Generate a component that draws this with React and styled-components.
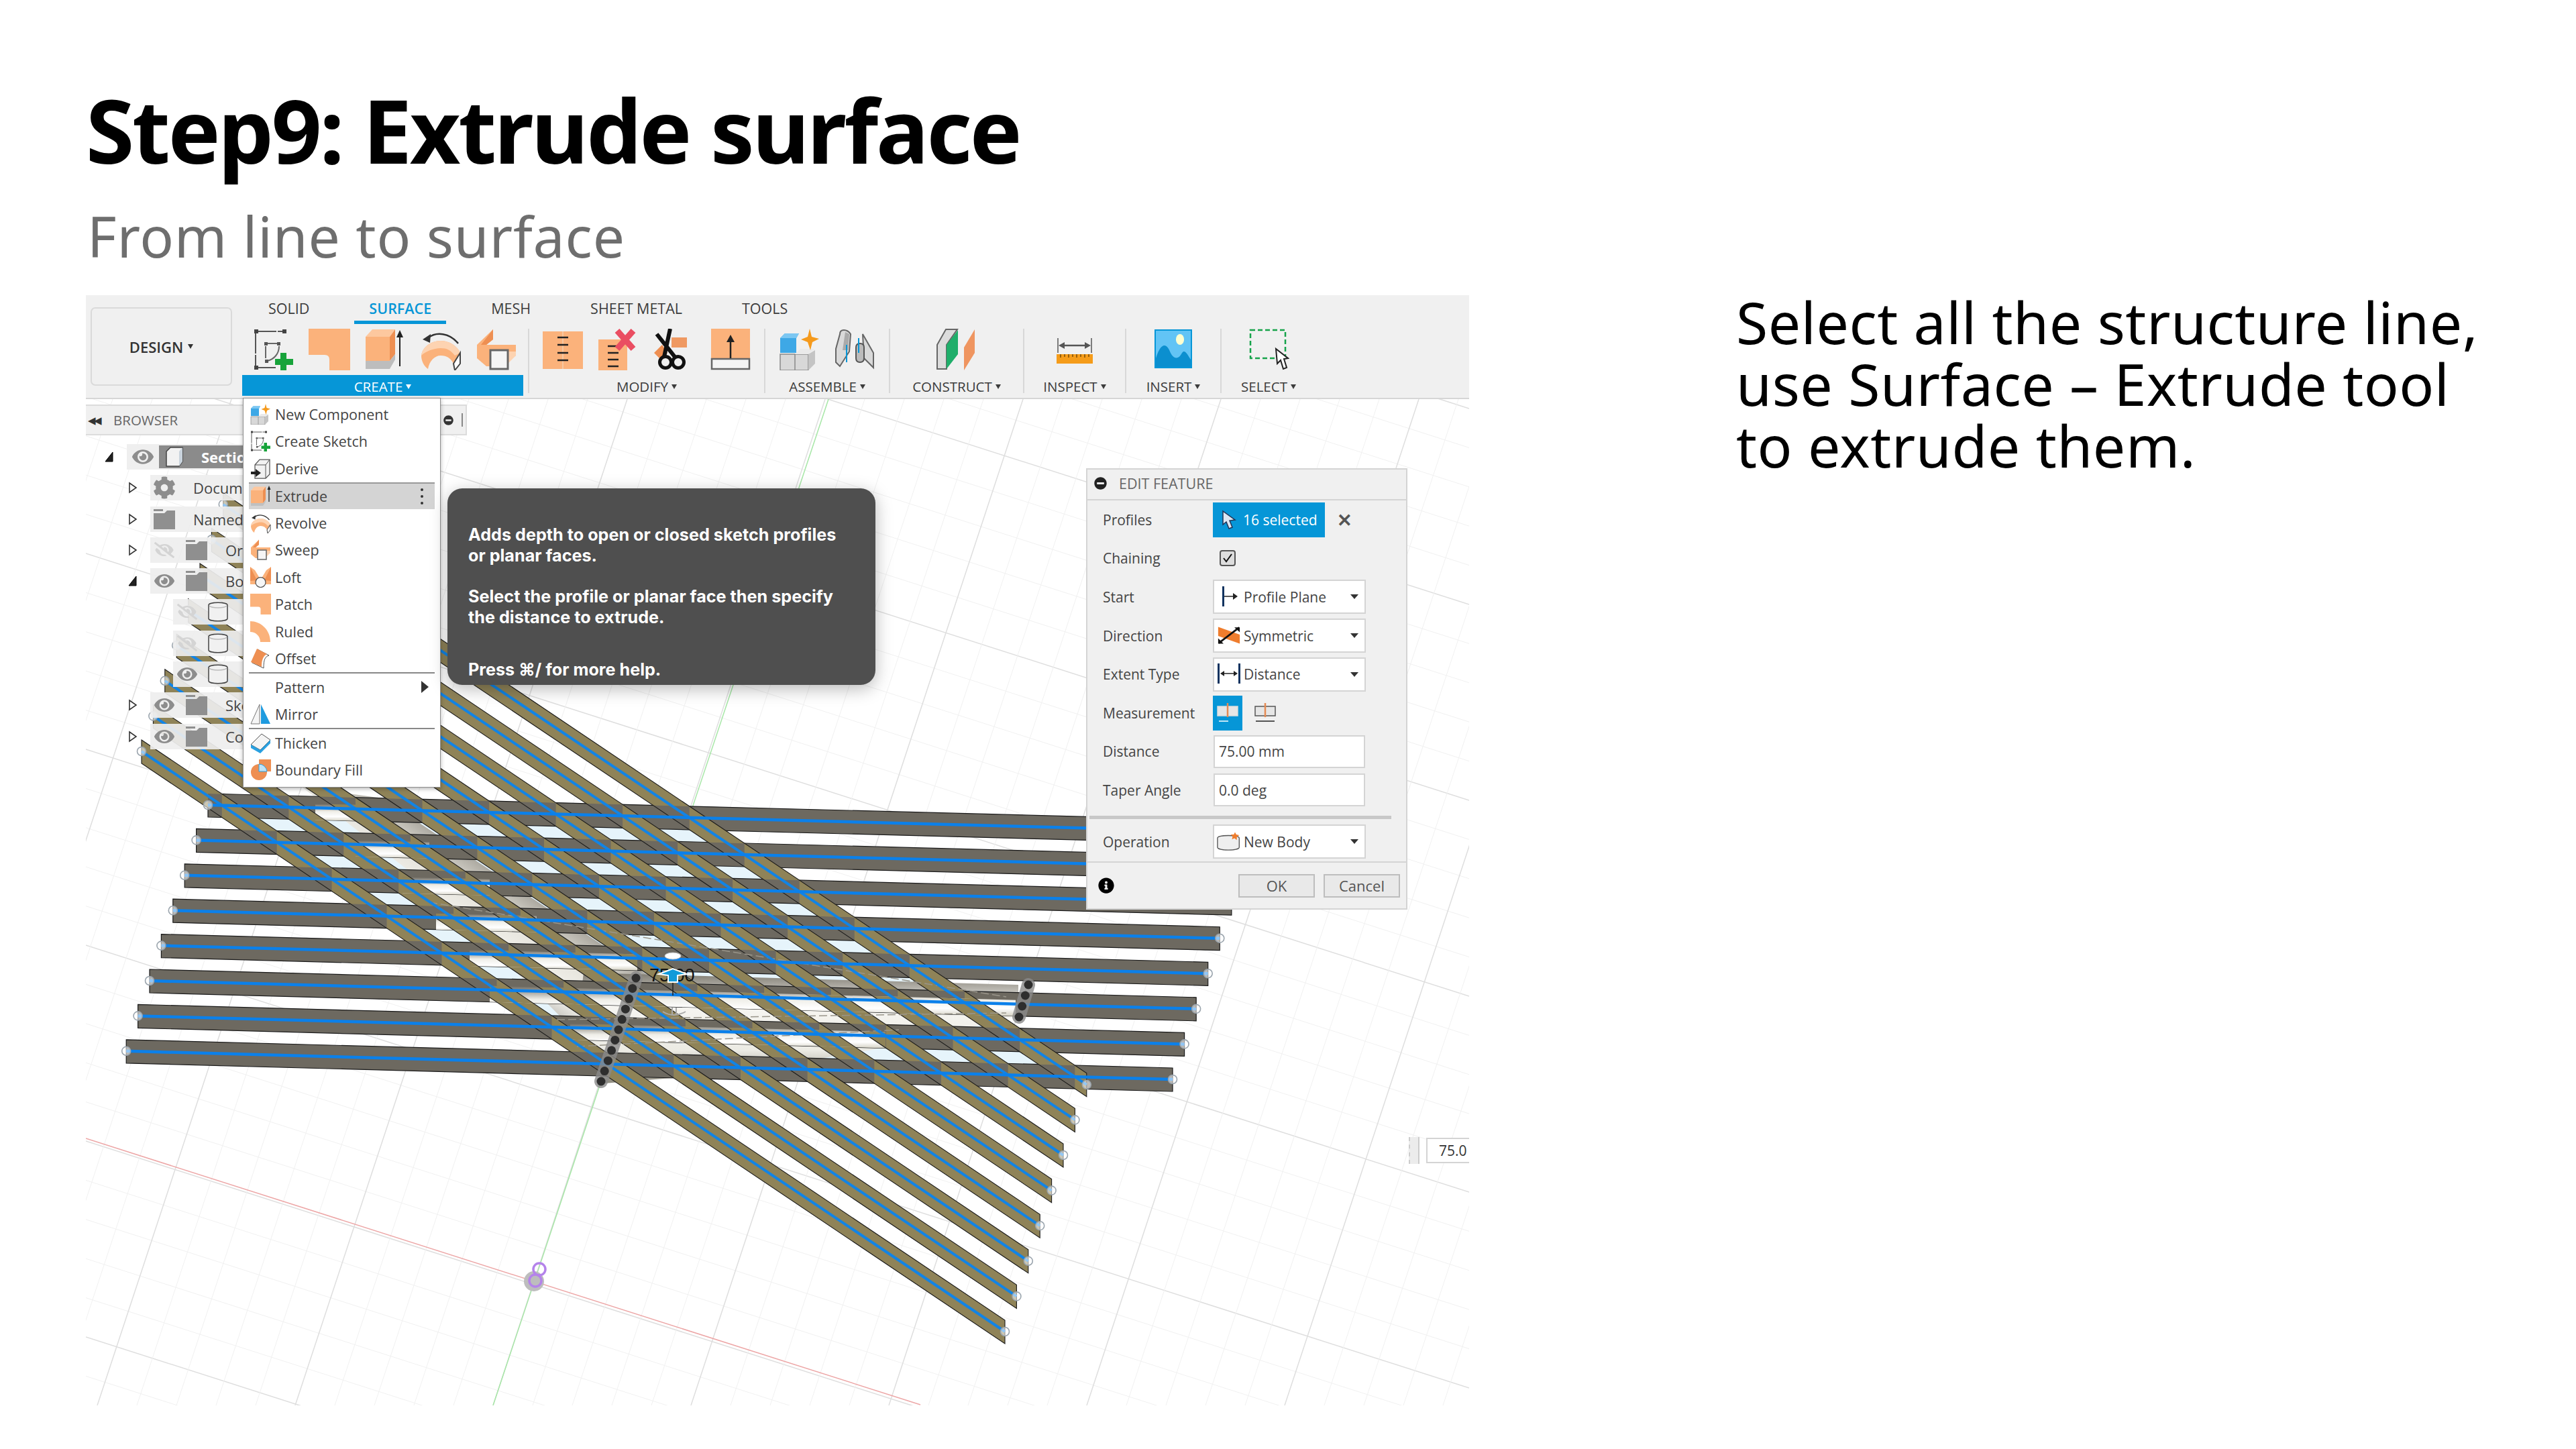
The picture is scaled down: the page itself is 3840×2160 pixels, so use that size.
import React from 'react'
import styled, { createGlobalStyle } from 'styled-components'
import { FaCog, FaEye, FaEyeSlash, FaInfoCircle, FaMinusCircle } from 'react-icons/fa'

const ORANGE = '#fbb27b'
const DARK_ORANGE = '#ee8f52'
const BLUE = '#0696d7'
const UI_FONT = '"Open Sans", "Noto Sans", sans-serif'

const GlobalStyle = createGlobalStyle`
  html, body {
    margin: 0;
    padding: 0;
    background: #fff;
  }
`

const Slide = styled.div`
  width: 3840px;
  height: 2160px;
  box-sizing: border-box;
  padding-left: 128px;
  display: grid;
  grid-template-columns: 2062px 1fr;
  column-gap: 398px;
  overflow: hidden;
  background: #fff;
`
const LeftColumn = styled.div`
  display: flex;
  flex-direction: column;
  padding-top: 118px;
`
const Title = styled.h1`
  margin: 0;
  height: 150px;
  font: 700 131px/150px 'Noto Sans', sans-serif;
  letter-spacing: -3.3px;
  color: #000;
  white-space: nowrap;
`
const Subtitle = styled.h2`
  margin: 34px 0 0 2px;
  height: 138px;
  font: 400 84px/100px 'Noto Sans', sans-serif;
  letter-spacing: 0.8px;
  color: #6e6e6e;
  white-space: nowrap;
`
const Notes = styled.div`
  padding-top: 434px;
  font: 400 86px/92px 'Noto Sans', sans-serif;
  letter-spacing: 0.5px;
  color: #000;
  white-space: nowrap;
`

const Shot = styled.div`
  width: 2062px;
  height: 1655px;
  display: flex;
  flex-direction: column;
  overflow: hidden;
  font-family: ${UI_FONT};
`

/* toolbar */
const Toolbar = styled.div`
  flex: none;
  height: 155px;
  box-sizing: border-box;
  display: flex;
  background: #f0f0f0;
  border-bottom: 2px solid #d6d6d6;
`
const DesignSlot = styled.div`
  flex: none;
  width: 233px;
  box-sizing: border-box;
  padding: 18px 15px 18px 7px;
  display: flex;
`
const DesignButton = styled.div`
  flex: 1;
  display: flex;
  align-items: center;
  justify-content: center;
  gap: 7px;
  border: 2px solid #dadada;
  border-radius: 7px;
  font-size: 22px;
  font-weight: 600;
  color: #333;
`
const ToolbarMain = styled.div`
  display: flex;
  flex-direction: column;
`
const Tabs = styled.div`
  height: 43px;
  display: flex;
  gap: 45px;
  padding-left: 17px;
`
const Tab = styled.div`
  box-sizing: border-box;
  height: 43px;
  padding: 6px 22px 0;
  font-size: 21.5px;
  line-height: 28px;
  color: ${p => (p.$active ? BLUE : '#3c3c3c')};
  font-weight: ${p => (p.$active ? 600 : 400)};
  border-bottom: 5px solid ${p => (p.$active ? BLUE : 'transparent')};
`
const Groups = styled.div`
  display: flex;
  padding-top: 7px;
`
const Group = styled.div`
  box-sizing: border-box;
  width: ${p => p.$width}px;
  height: 96px;
  display: flex;
  flex-direction: column;
  border-right: 2px solid #d8d8d8;
  &:last-child {
    border-right: none;
  }
`
const GroupIcons = styled.div`
  height: 69px;
  flex: none;
  display: flex;
  align-items: flex-start;
  justify-content: center;
  gap: 21px;
`
const GroupLabel = styled.div`
  width: ${p => (p.$active ? '419px' : 'auto')};
  height: 33px;
  box-sizing: border-box;
  padding-top: 3px;
  display: flex;
  align-items: center;
  justify-content: center;
  gap: 5px;
  font-size: 20.5px;
  color: ${p => (p.$active ? '#fff' : '#3c3c3c')};
  background: ${p => (p.$active ? BLUE : 'transparent')};
`
const Caret = styled.span`
  width: 0;
  height: 0;
  border-left: 4px solid transparent;
  border-right: 4px solid transparent;
  border-top: 7px solid currentColor;
`

/* viewport with floating panels */
const Viewport = styled.div`
  position: relative;
  flex: 1;
  background: #fff;
`
const Scene = styled.svg`
  position: absolute;
  left: 0;
  top: 0;
`
const SceneLabel = styled.text`
  font: 400 27px 'Liberation Sans', sans-serif;
  fill: #111;
`

const BrowserBar = styled.div`
  position: absolute;
  left: 0;
  top: 8px;
  width: 568px;
  height: 46px;
  box-sizing: border-box;
  display: flex;
  align-items: center;
  padding-left: 3px;
  background: #f0f0f0;
  border: solid #dcdcdc;
  border-width: 2px 2px 2px 0;
`
const Rewind = styled.span`
  width: 38px;
  font-size: 15px;
  letter-spacing: -3px;
  color: #333;
`
const BrowserTitle = styled.span`
  font-size: 20.5px;
  color: #666;
`
const BarEnd = styled.div`
  margin-left: auto;
  display: flex;
  align-items: center;
  gap: 12px;
  padding-right: 4px;
  color: #333;
  font-size: 15px;
`
const BarRule = styled.span`
  width: 2px;
  height: 20px;
  background: #888;
`
const Tree = styled.div`
  position: absolute;
  left: 0;
  top: 67px;
  width: 262px;
  display: flex;
  flex-direction: column;
  gap: 8.3px;
  overflow: hidden;
`
const TreeRow = styled.div`
  height: 38px;
  display: flex;
  align-items: center;
  padding-left: ${p => p.$indent}px;
`
const Expander = styled.span`
  flex: none;
  width: 33px;
  display: flex;
  align-items: center;
`
const RowBar = styled.div`
  flex: 1;
  min-width: 0;
  height: 38px;
  display: flex;
  align-items: center;
  background: rgba(238, 238, 238, 0.92);
  font-size: 22px;
  color: #444;
  white-space: nowrap;
`
const Selected = styled.div`
  flex: 1;
  height: 34px;
  display: flex;
  align-items: center;
  padding-left: 9px;
  background: #8b8b8b;
  color: #fff;
  font-weight: 700;
`
const Slot = styled.span`
  flex: none;
  width: ${p => p.$width}px;
  display: flex;
  align-items: center;
  justify-content: center;
  color: ${p => p.$color || '#8d8d8d'};
  font-size: ${p => p.$size || 28}px;
`

const Menu = styled.div`
  position: absolute;
  left: 234px;
  top: -2px;
  width: 295px;
  height: 581px;
  box-sizing: border-box;
  padding-top: 3px;
  background: #fff;
  border: 1px solid #8f8f8f;
  box-shadow: 0 2px 6px rgba(0, 0, 0, 0.3);
`
const MenuRow = styled.div`
  position: relative;
  height: 40.5px;
  margin: 0 8px;
  padding-left: 2px;
  box-sizing: border-box;
  display: flex;
  align-items: center;
  gap: 6px;
  font-size: 21.5px;
  color: #444;
  background: ${p => (p.$hover ? '#d4d4d4' : 'transparent')};
  border-top: ${p => (p.$hover ? '2px solid #999' : 'none')};
`
const MenuIconBox = styled.span`
  flex: none;
  width: 31px;
  height: 31px;
  display: flex;
`
const MenuRule = styled.div`
  height: 2px;
  margin: 0 8px;
  background: #888;
`
const Kebab = styled.span`
  margin-left: auto;
  margin-right: 17px;
  display: flex;
  flex-direction: column;
  gap: 6px;
`
const KebabDot = styled.i`
  width: 4px;
  height: 4px;
  border-radius: 50%;
  background: #333;
`
const Arrow = styled.span`
  margin-left: auto;
  margin-right: 9px;
  border-top: 9px solid transparent;
  border-bottom: 9px solid transparent;
  border-left: 11px solid #333;
`

const Tooltip = styled.div`
  position: absolute;
  left: 539px;
  top: 133px;
  width: 638px;
  height: 293px;
  box-sizing: border-box;
  padding: 54px 0 0 31px;
  background: #4f4f4f;
  border-radius: 22px;
  box-shadow: 0 6px 26px rgba(0, 0, 0, 0.28);
  color: #fff;
  font: 700 25.2px/31px Inter, sans-serif;
`
const TipPara = styled.p`
  margin: 0 0 ${p => p.$after}px;
  white-space: nowrap;
`

const Dialog = styled.div`
  position: absolute;
  left: 1491px;
  top: 103px;
  width: 479px;
  height: 658px;
  box-sizing: border-box;
  display: flex;
  flex-direction: column;
  background: #f0f0f0;
  border: 2px solid #d4d4d4;
  font-size: 21px;
  color: #444;
`
const DialogHead = styled.div`
  height: 46px;
  flex: none;
  box-sizing: border-box;
  padding: 0 0 3px 10px;
  display: flex;
  align-items: center;
  gap: 18px;
  border-bottom: 2px solid #d4d4d4;
  color: #666;
  font-size: 21.5px;
`
const FieldRow = styled.div`
  height: 57.6px;
  flex: none;
  display: flex;
  align-items: center;
  padding-left: 23px;
`
const FieldLabel = styled.div`
  flex: none;
  width: 164px;
`
const Picked = styled.div`
  width: 167px;
  height: 52px;
  display: flex;
  align-items: center;
  gap: 10px;
  padding-left: 13px;
  box-sizing: border-box;
  background: ${BLUE};
  color: #fff;
`
const Dismiss = styled.span`
  margin-left: 18px;
  font-size: 27px;
  font-weight: 700;
  color: #555;
`
const Check = styled.div`
  margin-left: 10px;
  width: 24px;
  height: 24px;
  box-sizing: border-box;
  display: flex;
  background: #ddd;
  border: 2px solid #555;
  border-radius: 4px;
`
const Select = styled.div`
  width: 228px;
  height: 51px;
  box-sizing: border-box;
  display: flex;
  align-items: center;
  padding-right: 9px;
  background: #fff;
  border: 2px solid #d4d4d4;
`
const SelectIcon = styled.span`
  flex: none;
  width: 44px;
  height: 32px;
  display: flex;
  justify-content: center;
`
const SelectCaret = styled(Caret)`
  margin-left: auto;
  border-left-width: 6px;
  border-right-width: 6px;
  border-top-width: 7px;
  color: #333;
`
const Segment = styled.div`
  width: 44px;
  height: 52px;
  margin-right: ${p => (p.$gap ? 12 : 0)}px;
  display: flex;
  align-items: center;
  justify-content: center;
  background: ${p => (p.$on ? BLUE : 'transparent')};
`
const TextBox = styled.div`
  width: 226px;
  height: 49px;
  margin-left: 1px;
  box-sizing: border-box;
  display: flex;
  align-items: center;
  padding-left: 6px;
  background: #fff;
  border: 2px solid #d4d4d4;
`
const DialogRule = styled.div`
  flex: none;
  height: 5px;
  margin: 9px 22px 5px 3px;
  background: #c8c8c8;
`
const DialogFoot = styled.div`
  flex: 1;
  margin-top: 1px;
  display: flex;
  align-items: center;
  gap: 13px;
  padding: 0 9px 0 16px;
  border-top: 2px solid #d4d4d4;
`
const FootButton = styled.div`
  width: 114px;
  height: 35px;
  box-sizing: border-box;
  display: flex;
  align-items: center;
  justify-content: center;
  background: #e9e9e9;
  border: 2px solid #bdbdbd;
  font-size: 22px;
  color: #555;
  margin-left: ${p => (p.$push ? 'auto' : 0)};
`

const FloatingField = styled.div`
  position: absolute;
  left: 1972px;
  top: 1101px;
  height: 38px;
  display: flex;
  align-items: center;
  gap: 10px;
`
const Grip = styled.div`
  width: 16px;
  height: 40px;
  background: #ececec;
  border-left: 2px dashed #ccc;
  border-right: 2px solid #ccc;
  box-sizing: border-box;
`
const FloatingBox = styled.div`
  width: 90px;
  height: 38px;
  box-sizing: border-box;
  padding-left: 17px;
  display: flex;
  align-items: center;
  background: #fff;
  border: 2px solid #d4d4d4;
  font-size: 21px;
  color: #333;
`

/* icons */
const Glyph = styled.svg`
  flex: none;
  display: block;
`
const Icon = ({ size = 62, children }) => (
  <Glyph width={size} height={size} viewBox="0 0 62 62">{children}</Glyph>
)

const Ticks = ({ x, ys, w = 16 }) => (
  <path d={ys.map(y => `M${x} ${y}h${w}`).join('')} stroke="#222" strokeWidth="2.5" />
)

const SketchIcon = p => (
  <Icon {...p}>
    <path d="M5 4H46M4 7V55M7 58H34" stroke="#555" strokeWidth="2" fill="none" strokeDasharray="30 2" />
    <path d="M2 1h6v6H2zM44 1h6v6h-6zM2 55h6v6H2z" fill="#444" />
    <path d="M20 22H38M19 26V44M39 26C39 38 31 46 21 48" stroke="#666" strokeWidth="2" fill="none" />
    <path d="M17 20h5v5h-5zM36 20h5v5h-5zM18 46h5v5h-5z" fill="#555" />
    <path d="M41 36h9v9h10v9H50v8h-9v-8H33v-9h8z" fill="#17a33a" />
  </Icon>
)
const PatchIcon = p => (
  <Icon {...p}><path d="M0 0H62V62H31V46Q31 39 24 39H0Z" fill={ORANGE} /></Icon>
)
const ExtrudeIcon = p => (
  <Icon {...p}>
    <path d="M2 12L12 1H46L38 12Z" fill="#fdc89f" />
    <path d="M2 12H38V48H2Z" fill={ORANGE} />
    <path d="M38 12L46 1V38L38 48Z" fill={DARK_ORANGE} />
    <path d="M2 48H38L46 38V46L38 60H2Z" fill="#bdbdbd" />
    <path d="M53 56V10" stroke="#222" strokeWidth="2" />
    <path d="M48 13L53 2L58 13Z" fill="#222" />
  </Icon>
)
const RevolveIcon = p => (
  <Icon {...p}>
    <path d="M12 14C24 4 44 6 57 22" stroke="#333" strokeWidth="2.5" fill="none" />
    <path d="M4 16L16 8L15 21Z" fill="#333" />
    <path d="M2 40C4 26 18 18 31 18C44 18 56 26 60 36L50 52C46 44 40 40 31 40C22 40 14 48 12 60C6 56 2 48 2 40Z" fill={ORANGE} />
    <path d="M2 40C4 26 18 18 31 18C44 18 56 26 60 36L52 40C46 32 40 29 31 29C20 29 8 34 2 40Z" fill="#fdd3b1" />
    <path d="M50 52L60 36V52L52 62Z" fill="#fff" stroke="#444" strokeWidth="2" />
  </Icon>
)
const SweepIcon = p => (
  <Icon {...p}>
    <path d="M2 24L26 1V16L16 24H60V40L46 50V34H30V56H16L2 44Z" fill={ORANGE} />
    <path d="M26 1V16L16 24H8Z" fill={DARK_ORANGE} />
    <path d="M21 34H60V40L48 52V34Z" fill="#fdd3b1" />
    <rect x="22" y="32" width="26" height="28" fill="#f5f5f5" stroke="#666" strokeWidth="3" />
  </Icon>
)
const SplitIcon = p => (
  <Icon {...p}>
    <rect x="0" y="4" width="60" height="56" fill={ORANGE} />
    <path d="M30 4V60" stroke="#f7c7a0" strokeWidth="2" />
    <Ticks x={22} ys={[13, 24, 36, 47]} />
  </Icon>
)
const TrimIcon = p => (
  <Icon {...p}>
    <rect x="0" y="16" width="43" height="46" fill={ORANGE} />
    <Ticks x={14} ys={[26, 36, 46, 56]} />
    <path d="M28 3L52 30M52 3L28 30" stroke="#ea4e62" strokeWidth="9" />
  </Icon>
)
const ScissorsIcon = p => (
  <Icon {...p}>
    <rect x="26" y="13" width="23" height="15" fill={DARK_ORANGE} opacity="0.9" />
    <path d="M0 36L12 24L20 36L10 46Z" fill={DARK_ORANGE} />
    <path d="M4 8L31 42M24 0L15 42" stroke="#111" strokeWidth="6" fill="none" />
    <circle cx="36" cy="50" r="8.5" stroke="#111" strokeWidth="5" fill="none" />
    <circle cx="17" cy="50" r="8.5" stroke="#111" strokeWidth="5" fill="none" />
  </Icon>
)
const ThickenBarIcon = p => (
  <Icon {...p}>
    <rect x="2" y="0" width="58" height="44" fill={ORANGE} />
    <rect x="3" y="45" width="56" height="15" fill="#f4f4f4" stroke="#666" strokeWidth="2.5" />
    <path d="M31 44V16" stroke="#222" strokeWidth="2.5" />
    <path d="M25 20L31 9L37 20Z" fill="#222" />
  </Icon>
)
const ComponentIcon = p => (
  <Icon {...p}>
    <path d="M2 38H44V62H2Z" fill="#d8d8d8" stroke="#888" strokeWidth="1.5" />
    <path d="M24 38V62" stroke="#888" strokeWidth="1.5" />
    <path d="M44 62L54 52V32L44 38Z" fill="#c4c4c4" />
    <path d="M24 38L32 30H54L44 38Z" fill="#eaeaea" />
    <path d="M2 14L9 7H30L26 14V36H2Z" fill="#3ea8e6" />
    <path d="M2 14L9 7H30L26 14Z" fill="#7cc7f2" />
    <path d="M46 0L49 12L60 15L50 20L47 32L43 20L33 16L43 12Z" fill="#f59a1c" />
  </Icon>
)
const JointIcon = p => (
  <Icon {...p}>
    <path d="M8 8Q8 2 14 2T24 8L22 34L8 56L2 50V30Z" fill="#d9d9d9" stroke="#666" strokeWidth="2" />
    <path d="M16 5L22 8L20 32L12 32Z" fill="#aaa" />
    <path d="M42 8L58 36V58L44 44Z" fill="#d9d9d9" stroke="#666" strokeWidth="2" />
    <path d="M32 28Q32 22 38 22T44 28V44Q44 50 38 50T32 44Z" fill="#bbb" stroke="#555" strokeWidth="2" />
    <path d="M36 14V36M18 24V50" stroke={BLUE} strokeWidth="2" />
  </Icon>
)
const ConstructIcon = p => (
  <Icon {...p}>
    <path d="M2 24L15 1H32L16 24V60H2Z" fill="#dcdcdc" stroke="#666" strokeWidth="2" />
    <path d="M16 24L33 2V38L16 60Z" fill="#1fae6a" />
    <path d="M42 28L58 1V36L42 62Z" fill="#ef9560" />
  </Icon>
)
const InspectIcon = p => (
  <Icon {...p}>
    <path d="M6 14V36M56 14V36" stroke="#555" strokeWidth="1.5" />
    <path d="M10 25H52" stroke="#555" strokeWidth="2.5" />
    <path d="M7 25L16 20V30ZM55 25L46 20V30Z" fill="#555" />
    <rect x="4" y="38" width="54" height="14" fill="#f59c1a" />
    <path d="M10 38v5M16 38v4M22 38v5M28 38v4M34 38v5M40 38v4M46 38v5M52 38v4" stroke="#7a4b06" strokeWidth="1.5" />
  </Icon>
)
const InsertIcon = p => (
  <Icon {...p}>
    <rect x="4" y="2" width="54" height="56" fill="#62c4f5" stroke={BLUE} strokeWidth="2" />
    <path d="M5 44C12 22 20 20 26 34C30 44 38 48 44 36C48 30 52 38 57 46V57H5Z" fill="#0b8fcf" />
    <ellipse cx="41" cy="16" rx="6" ry="8" fill="#ffffd0" />
  </Icon>
)
const SelectIconArt = p => (
  <Icon {...p}>
    <rect x="4" y="2" width="52" height="42" fill="none" stroke="#16a34a" strokeWidth="2.5" strokeDasharray="7 4" />
    <path d="M42 30L44 52L49 47L53 60L58 58L54 45L60 44Z" fill="#fff" stroke="#222" strokeWidth="2" />
  </Icon>
)
const DeriveIcon = p => (
  <Icon {...p}>
    <path d="M14 20L28 4H58V48L46 60H14Z" fill="#f2f2f2" stroke="#555" strokeWidth="2.5" />
    <path d="M46 20H14M46 20V60M46 20L58 4" stroke="#555" strokeWidth="2" fill="none" />
    <path d="M2 40H16V32L32 44L16 56V48H2Z" fill="#222" />
  </Icon>
)
const LoftIcon = p => (
  <Icon {...p}>
    <path d="M0 0L14 10L26 30H36L48 10L62 0V52H0Z" fill={ORANGE} />
    <path d="M0 0V42L20 40Z" fill={DARK_ORANGE} />
    <path d="M62 0V42L42 40Z" fill={DARK_ORANGE} />
    <circle cx="31" cy="46" r="15" fill="#f6f6f6" stroke="#555" strokeWidth="2.5" />
  </Icon>
)
const RuledIcon = p => (
  <Icon {...p}><path d="M0 0C30 0 60 24 60 62H30C30 44 16 32 0 32Z" fill={ORANGE} /></Icon>
)
const OffsetIcon = p => (
  <Icon {...p}>
    <path d="M6 44L22 4L56 22C44 26 40 34 40 60Z" fill="#fff" stroke="#555" strokeWidth="2" />
    <path d="M2 42L20 2L50 18C38 24 34 36 34 56Z" fill={DARK_ORANGE} />
  </Icon>
)
const MirrorIcon = p => (
  <Icon {...p}>
    <path d="M28 2L2 60H28Z" fill="#f5f5f5" stroke="#777" strokeWidth="2" />
    <path d="M32 2L60 60H32Z" fill="#1f9bdf" />
  </Icon>
)
const ThickenIcon = p => (
  <Icon {...p}>
    <path d="M2 36L34 4L60 22L30 52Z" fill="#f4f4f4" stroke="#555" strokeWidth="2" />
    <path d="M2 36L30 52L60 22V32L30 62L2 46Z" fill="#29a0e0" />
  </Icon>
)
const BoundaryIcon = p => (
  <Icon {...p}>
    <rect x="26" y="0" width="36" height="36" fill={DARK_ORANGE} />
    <circle cx="26" cy="38" r="24" fill={DARK_ORANGE} />
    <path d="M26 14V36H50A24 24 0 0 0 26 14Z" fill="#bfe3f6" stroke="#29a0e0" strokeWidth="2" />
  </Icon>
)
const ExtrudeSmall = p => (
  <Icon {...p}>
    <path d="M2 14L12 3H46L38 14Z" fill="#fdc89f" />
    <path d="M2 14H38V52H2Z" fill={ORANGE} />
    <path d="M38 14L46 3V42L38 52Z" fill={DARK_ORANGE} />
    <path d="M2 52H38L46 42V48L38 60H2Z" fill="#c0c0c0" />
    <path d="M56 48V8" stroke="#222" strokeWidth="2.5" />
    <path d="M51 12L56 0L61 12Z" fill="#222" />
  </Icon>
)
const BrowserCube = () => (
  <Glyph width="28" height="30" viewBox="0 0 28 30">
    <path d="M2 7L8 1H26V22L21 29H2Z" fill="#f2f2f2" stroke="#444" strokeWidth="1.5" />
    <path d="M21 7V29L26 22V1Z" fill="#c9d3dc" />
  </Glyph>
)
const CylinderIcon = () => (
  <Glyph width="30" height="32" viewBox="0 0 30 32">
    <path d="M1 6C1 1 29 1 29 6V26C29 31 1 31 1 26Z" fill="#f1f1f1" stroke="#444" strokeWidth="1.5" />
    <path d="M2 7C6 11 24 11 28 7" fill="none" stroke="#bbb" strokeWidth="1.5" />
  </Glyph>
)
const FolderIcon = () => (
  <Glyph width="32" height="30" viewBox="0 0 32 30">
    <path d="M0 0H14V3H0ZM0 6H16L20 2H32V30H0Z" fill="#8f8f8f" />
  </Glyph>
)
const TreeArrow = ({ open }) => (
  <Glyph width="14" height="18" viewBox="0 0 14 18">
    {open
      ? <path d="M1 16L12 2V16Z" fill="#222" stroke="#000" />
      : <path d="M2 2L12 9L2 16Z" fill="#fff" stroke="#333" strokeWidth="1.6" />}
  </Glyph>
)
const CursorIcon = () => (
  <Glyph width="22" height="30" viewBox="0 0 22 30">
    <path d="M2 2L2 22L7 18L11 28L16 26L12 16L20 15Z" fill="#dbe7f3" stroke="#235" strokeWidth="1.5" />
  </Glyph>
)
const StartIcon = () => (
  <Glyph width="30" height="30" viewBox="0 0 30 30">
    <path d="M5 0h3v30H5z" fill="#10335f" />
    <path d="M8 15H22" stroke="#222" strokeWidth="1.5" />
    <path d="M21 10L28 15L21 20Z" fill="#222" />
  </Glyph>
)
const SymmetricIcon = () => (
  <Glyph width="34" height="30" viewBox="0 0 38 30">
    <path d="M1 1L37 14V29L1 16Z" fill="#ef7d2d" />
    <path d="M2 28L36 2" stroke="#111" strokeWidth="3" />
    <path d="M28 2H37V10ZM1 29V20L10 29Z" fill="#111" />
  </Glyph>
)
const DistanceIcon = () => (
  <Glyph width="36" height="30" viewBox="0 0 36 30">
    <path d="M1 0h3v30H1zM32 0h3v30h-3z" fill="#10335f" />
    <path d="M8 15H28" stroke="#222" strokeWidth="1.5" />
    <path d="M11 11L5 15L11 19ZM25 11L31 15L25 19Z" fill="#222" />
  </Glyph>
)
const NewBodyIcon = () => (
  <Glyph width="36" height="30" viewBox="0 0 40 30">
    <path d="M1 10C1 4 37 4 37 10V25C37 31 1 31 1 25Z" fill="#efefef" stroke="#555" strokeWidth="1.5" />
    <path d="M30 0L32 4L37 5L33 8L33 13L29 10L25 12L26 7L23 4L28 4Z" fill="#ef7d2d" />
  </Glyph>
)
const MeasureIcon = ({ light }) => (
  <Glyph width="32" height="32" viewBox="0 0 32 32">
    <rect x="1" y="6" width="30" height="14" fill="#e6e6e6" stroke={light ? '#ddd' : '#555'} strokeWidth="1.5" />
    <path d="M16 1V22" stroke="#e58a52" strokeWidth="2.5" />
    <path d={light ? 'M3 28H17' : 'M2 28H30'} stroke={light ? '#fff' : '#222'} strokeWidth="1.5" />
  </Glyph>
)
const CheckMark = () => (
  <Glyph width="20" height="20" viewBox="0 0 20 20">
    <path d="M4 10L8 15L16 4" fill="none" stroke="#111" strokeWidth="2" />
  </Glyph>
)

/* 3d scene geometry, in slide pixels */
const BEAM = 35
const RANGE = n => Array.from({ length: n }, (_, i) => i)
const hBeams = RANGE(8).map(k => ({
  x0: 310 - 17.4 * k, y0: 1183 + 52.4 * k, x1: 1871 - 17.57 * k, y1: 1224 + 52.57 * k,
}))
const dBeams = RANGE(8).map(j => ({
  x0: 211 + 17.4 * j, y0: 1103 - 52.6 * j, x1: 1498 + 17.4 * j, y1: 1968 - 52.6 * j,
}))
const slope = b => (b.y1 - b.y0) / (b.x1 - b.x0)
const topAt = (b, x) => b.y0 + slope(b) * (x - b.x0)
const quad = b => `${b.x0},${b.y0} ${b.x1},${b.y1} ${b.x1},${b.y1 + BEAM} ${b.x0},${b.y0 + BEAM}`

// left half of every crossing: the gray wall stands in front of the gold one
const crossings = hBeams.flatMap((h, k) => dBeams.map(d => {
  const dm = slope(d) - slope(h)
  const xb = (h.y0 - d.y0 + slope(d) * d.x0 - slope(h) * h.x0) / dm
  const xa = xb - BEAM / dm
  return { k, pts: `${xa},${topAt(h, xa)} ${xb},${topAt(h, xb)} ${xb},${topAt(h, xb) + BEAM}` }
}))

// parts of the extruded surface showing over the gray walls
const lensStrips = [
  { k: 0, from: 470, to: 530 }, { k: 1, from: 530, to: 640 }, { k: 2, from: 600, to: 730 },
  { k: 3, from: 650, to: 800 }, { k: 4, from: 700, to: 950 }, { k: 5, from: 730, to: 1514 },
  { k: 6, from: 850, to: 1320 },
].map(({ k, from, to }) => {
  const h = hBeams[k]
  return `${from},${topAt(h, from) + 11} ${to},${topAt(h, to) + 11} ${to},${topAt(h, to) + BEAM} ${from},${topAt(h, from) + BEAM}`
})

const gridA = RANGE(64).map(i => ({ y: 825 - 292 * 3 + 58.4 * i, major: i % 5 === 0 }))
const gridB = RANGE(56).map(i => ({ x: 735 - 59 * 20 + 59 * i, major: i % 5 === 0 }))

const Manipulator = ({ x0, y0, x1, y1, n }) => (
  <g>
    <path d={`M${x0} ${y0}L${x1} ${y1}`} stroke="#8a8a8a" strokeOpacity="0.8" strokeWidth="20" strokeLinecap="round" />
    {RANGE(n).map(i => (
      <circle key={i} cx={x0 + (x1 - x0) * i / (n - 1)} cy={y0 + (y1 - y0) * i / (n - 1)} r="6.5" fill="#2e2e2e" />
    ))}
  </g>
)
const EndDot = ({ x, y }) => (
  <circle cx={x} cy={y} r="6.5" fill="#fff" fillOpacity="0.55" stroke="#9aa4ad" strokeWidth="1.6" />
)

const SceneDrawing = () => (
  <Scene width="2062" height="1500" viewBox="128 595 2062 1500">
    <defs>
      <linearGradient id="bodyFill" gradientUnits="userSpaceOnUse" x1="620" y1="1440" x2="745" y2="1255">
        <stop offset="0" stopColor="#77736a" />
        <stop offset="0.38" stopColor="#f4f3ee" />
        <stop offset="0.6" stopColor="#e6e4dc" />
        <stop offset="1" stopColor="#77736a" />
      </linearGradient>
      <linearGradient id="bodyTail" x1="0" y1="0" x2="0" y2="1">
        <stop offset="0" stopColor="#7d796f" />
        <stop offset="0.3" stopColor="#f6f5f1" />
        <stop offset="0.7" stopColor="#ecebe4" />
        <stop offset="1" stopColor="#8d8a7d" />
      </linearGradient>
      <linearGradient id="lensFill" x1="0" y1="0" x2="0" y2="1">
        <stop offset="0" stopColor="#6d6960" />
        <stop offset="0.45" stopColor="#efeee8" />
        <stop offset="0.75" stopColor="#ffffff" />
        <stop offset="1" stopColor="#d5d2c4" />
      </linearGradient>
      <clipPath id="lensClip">
        {lensStrips.map((pts, i) => <polygon key={i} points={pts} />)}
      </clipPath>
      {hBeams.map((h, k) => (
        <clipPath key={k} id={`hClip${k}`}><polygon points={quad(h)} /></clipPath>
      ))}
    </defs>
    {gridA.map((l, i) => (
      <path key={i} d={`M128 ${l.y}L2190 ${l.y + 660}`} stroke={l.major ? '#dedede' : '#f1f1f1'} strokeWidth={l.major ? 1.5 : 1} />
    ))}
    {gridB.map((l, i) => (
      <path key={i} d={`M${l.x} 2095L${l.x + 495} 595`} stroke={l.major ? '#dedede' : '#f1f1f1'} strokeWidth={l.major ? 1.5 : 1} />
    ))}
    <path d="M128 1697L1372 2094" stroke="#eda6a6" strokeWidth="1.5" />
    <path d="M735 2095L1235 595" stroke="#a6e6a6" strokeWidth="1.5" />
    <circle cx="796" cy="1910" r="15" fill="#bdbdbd" />
    <circle cx="798" cy="1909" r="9" fill="none" stroke="#b483ea" strokeWidth="3.5" />
    <circle cx="804" cy="1892" r="9" fill="none" stroke="#b483ea" strokeWidth="3.5" />

    <polygon points="330,1200 1026,1219 1598,1605 903,1587" fill="#e6f4fb" />
    <polygon points="450,1173 570,1190 975,1460 860,1540 650,1330" fill="url(#bodyFill)" />
    <polygon points="870,1450 1518,1468 1518,1515 1300,1565 1090,1600 900,1615 860,1530" fill="url(#bodyTail)" />
    {hBeams.map((h, k) => <polygon key={k} points={quad(h)} fill="#6d6960" stroke="#1a1a1a" strokeWidth="1.2" />)}
    {dBeams.map((d, j) => <polygon key={j} points={quad(d)} fill="#8f8358" />)}
    {crossings.map((c, i) => (
      <polygon key={i} points={c.pts} fill="#6d6960" clipPath={`url(#hClip${c.k})`} />
    ))}
    {lensStrips.map((pts, i) => <polygon key={i} points={pts} fill="url(#lensFill)" />)}
    <g clipPath="url(#lensClip)">
      {dBeams.map((d, j) => <polygon key={j} points={quad(d)} fill="#8f8358" />)}
    </g>
    {dBeams.map((d, j) => (
      <polygon key={j} points={quad(d)} fill="none" stroke="#1a1a1a" strokeWidth="1.1" />
    ))}
    <path d="M830 1520L1500 1510M640 1345L1500 1486M860 1560L1340 1535" stroke="#99958a" strokeWidth="1.5" strokeDasharray="12 5" fill="none" />
    {dBeams.map((d, j) => (
      <path key={j} d={`M${d.x0} ${d.y0 + 17}L${d.x1} ${d.y1 + 17}`} stroke="#1184e6" strokeWidth="4" />
    ))}
    {hBeams.map((h, k) => (
      <path key={k} d={`M${h.x0} ${h.y0 + 17}L${h.x1} ${h.y1 + 17}`} stroke="#0b80ea" strokeWidth="4.5" />
    ))}
    {hBeams.map((h, k) => <EndDot key={k} x={h.x0} y={h.y0 + 17} />)}
    {hBeams.map((h, k) => <EndDot key={k} x={h.x1} y={h.y1 + 17} />)}
    {dBeams.map((d, j) => <EndDot key={j} x={d.x0} y={d.y0 + 17} />)}
    {dBeams.map((d, j) => <EndDot key={j} x={d.x1} y={d.y1 + 17} />)}
    <Manipulator x0={896} y0={1612} x1={948} y1={1458} n={11} />
    <Manipulator x0={1519} y0={1516} x1={1533} y1={1468} n={4} />
    <SceneLabel x="968" y="1463">75.00</SceneLabel>
    <path d="M1003 1462V1484" stroke="#222" strokeWidth="1.5" />
    <path d="M982 1452L1003 1444L1024 1452L1010 1454V1464H996V1454Z" fill="#129bd9" stroke="#fff" strokeWidth="2" />
    <path d="M988 1508Q1004 1518 1022 1508M1002 1502V1512M1008 1502V1512" stroke="#aaa" strokeWidth="2" fill="none" />
    <ellipse cx="1003" cy="1425" rx="12" ry="5" fill="#fff" stroke="#bbb" />
  </Scene>
)

const createTools = [SketchIcon, PatchIcon, ExtrudeIcon, RevolveIcon, SweepIcon]
const groups = [
  { label: 'CREATE', width: 428, icons: createTools, active: true },
  { label: 'MODIFY', width: 352, icons: [SplitIcon, TrimIcon, ScissorsIcon, ThickenBarIcon] },
  { label: 'ASSEMBLE', width: 186, icons: [ComponentIcon, JointIcon] },
  { label: 'CONSTRUCT', width: 200, icons: [ConstructIcon] },
  { label: 'INSPECT', width: 152, icons: [InspectIcon] },
  { label: 'INSERT', width: 142, icons: [InsertIcon] },
  { label: 'SELECT', width: 140, icons: [SelectIconArt] },
]
const tabs = ['SOLID', 'SURFACE', 'MESH', 'SHEET METAL', 'TOOLS']

const menuTop = [
  ['New Component', ComponentIcon], ['Create Sketch', SketchIcon], ['Derive', DeriveIcon],
  ['Extrude', ExtrudeSmall, true], ['Revolve', RevolveIcon], ['Sweep', SweepIcon],
  ['Loft', LoftIcon], ['Patch', PatchIcon], ['Ruled', RuledIcon], ['Offset', OffsetIcon],
]
const menuBottom = [['Thicken', ThickenIcon], ['Boundary Fill', BoundaryIcon]]

const treeRows = [
  { indent: 28, open: true, name: 'Section', selected: true },
  { indent: 63, gear: true, name: 'Document Settings' },
  { indent: 63, folder: true, name: 'Named Views', nameOnly: true },
  { indent: 63, eye: false, folder: true, name: 'Origin' },
  { indent: 63, open: true, eye: true, folder: true, name: 'Bodies' },
  { indent: 130, leaf: true, eye: false, cyl: true },
  { indent: 130, leaf: true, eye: false, cyl: true },
  { indent: 130, leaf: true, eye: true, cyl: true },
  { indent: 63, eye: true, folder: true, name: 'Sketches' },
  { indent: 63, eye: true, folder: true, name: 'Construction' },
]

const selects = [
  ['Start', StartIcon, 'Profile Plane'],
  ['Direction', SymmetricIcon, 'Symmetric'],
  ['Extent Type', DistanceIcon, 'Distance'],
]

const TreeItem = ({ row }) => (
  <TreeRow $indent={row.indent}>
    {!row.leaf && <Expander><TreeArrow open={row.open} /></Expander>}
    {row.selected ? (
      <RowBar>
        <Slot $width={48} $size={32}><FaEye /></Slot>
        <Selected><BrowserCube /><Slot $width={26} />{row.name}</Selected>
      </RowBar>
    ) : (
      <RowBar>
        {row.gear && <Slot $width={42} $size={34}><FaCog /></Slot>}
        {row.nameOnly && <Slot $width={42}><FolderIcon /></Slot>}
        {row.eye === true && <Slot $width={42} $size={30}><FaEye /></Slot>}
        {row.eye === false && <Slot $width={42} $size={30} $color="#d4d4d4"><FaEyeSlash /></Slot>}
        {row.folder && !row.nameOnly && <Slot $width={54}><FolderIcon /></Slot>}
        {row.cyl && <Slot $width={50}><CylinderIcon /></Slot>}
        {(row.gear || row.nameOnly) && <Slot $width={22} />}
        {row.folder && !row.nameOnly && <Slot $width={16} />}
        {row.name}
      </RowBar>
    )}
  </TreeRow>
)

const MenuItem = ({ label, icon: Art, hover, children }) => (
  <MenuRow $hover={hover}>
    <MenuIconBox>{Art && <Art size={31} />}</MenuIconBox>
    {label}
    {children}
  </MenuRow>
)

const App = () => (
  <Slide>
    <GlobalStyle />
    <LeftColumn>
      <Title>Step9: Extrude surface</Title>
      <Subtitle>From line to surface</Subtitle>
      <Shot>
        <Toolbar>
          <DesignSlot>
            <DesignButton>DESIGN <Caret /></DesignButton>
          </DesignSlot>
          <ToolbarMain>
            <Tabs>
              {tabs.map(t => <Tab key={t} $active={t === 'SURFACE'}>{t}</Tab>)}
            </Tabs>
            <Groups>
              {groups.map(g => (
                <Group key={g.label} $width={g.width}>
                  <GroupIcons>
                    {g.icons.map((Art, i) => <Art key={i} />)}
                  </GroupIcons>
                  <GroupLabel $active={g.active}>{g.label} <Caret /></GroupLabel>
                </Group>
              ))}
            </Groups>
          </ToolbarMain>
        </Toolbar>
        <Viewport>
          <SceneDrawing />
          <BrowserBar>
            <Rewind>◀◀</Rewind>
            <BrowserTitle>BROWSER</BrowserTitle>
            <BarEnd><FaMinusCircle /><BarRule /></BarEnd>
          </BrowserBar>
          <Tree>
            {treeRows.map((row, i) => <TreeItem key={i} row={row} />)}
          </Tree>
          <Menu>
            {menuTop.map(([label, art, hover]) => (
              <MenuItem key={label} label={label} icon={art} hover={hover}>
                {hover && <Kebab><KebabDot /><KebabDot /><KebabDot /></Kebab>}
              </MenuItem>
            ))}
            <MenuRule />
            <MenuItem label="Pattern"><Arrow /></MenuItem>
            <MenuItem label="Mirror" icon={MirrorIcon} />
            <MenuRule />
            {menuBottom.map(([label, art]) => <MenuItem key={label} label={label} icon={art} />)}
          </Menu>
          <Tooltip>
            <TipPara $after={30}>Adds depth to open or closed sketch profiles<br />or planar faces.</TipPara>
            <TipPara $after={47}>Select the profile or planar face then specify<br />the distance to extrude.</TipPara>
            <TipPara $after={0}>Press ⌘/ for more help.</TipPara>
          </Tooltip>
          <Dialog>
            <DialogHead><FaMinusCircle color="#222" size={19} />EDIT FEATURE</DialogHead>
            <FieldRow>
              <FieldLabel>Profiles</FieldLabel>
              <Picked><CursorIcon />16 selected</Picked>
              <Dismiss>✕</Dismiss>
            </FieldRow>
            <FieldRow>
              <FieldLabel>Chaining</FieldLabel>
              <Check><CheckMark /></Check>
            </FieldRow>
            {selects.map(([label, Art, value]) => (
              <FieldRow key={label}>
                <FieldLabel>{label}</FieldLabel>
                <Select><SelectIcon><Art /></SelectIcon>{value}<SelectCaret /></Select>
              </FieldRow>
            ))}
            <FieldRow>
              <FieldLabel>Measurement</FieldLabel>
              <Segment $on $gap><MeasureIcon light /></Segment>
              <Segment><MeasureIcon /></Segment>
            </FieldRow>
            <FieldRow>
              <FieldLabel>Distance</FieldLabel>
              <TextBox>75.00 mm</TextBox>
            </FieldRow>
            <FieldRow>
              <FieldLabel>Taper Angle</FieldLabel>
              <TextBox>0.0 deg</TextBox>
            </FieldRow>
            <DialogRule />
            <FieldRow>
              <FieldLabel>Operation</FieldLabel>
              <Select><SelectIcon><NewBodyIcon /></SelectIcon>New Body<SelectCaret /></Select>
            </FieldRow>
            <DialogFoot>
              <FaInfoCircle size={24} color="#000" />
              <FootButton $push>OK</FootButton>
              <FootButton>Cancel</FootButton>
            </DialogFoot>
          </Dialog>
          <FloatingField>
            <Grip />
            <FloatingBox>75.0</FloatingBox>
          </FloatingField>
        </Viewport>
      </Shot>
    </LeftColumn>
    <Notes>
      Select all the structure line,<br />
      use Surface – Extrude tool<br />
      to extrude them.
    </Notes>
  </Slide>
)

export default App
